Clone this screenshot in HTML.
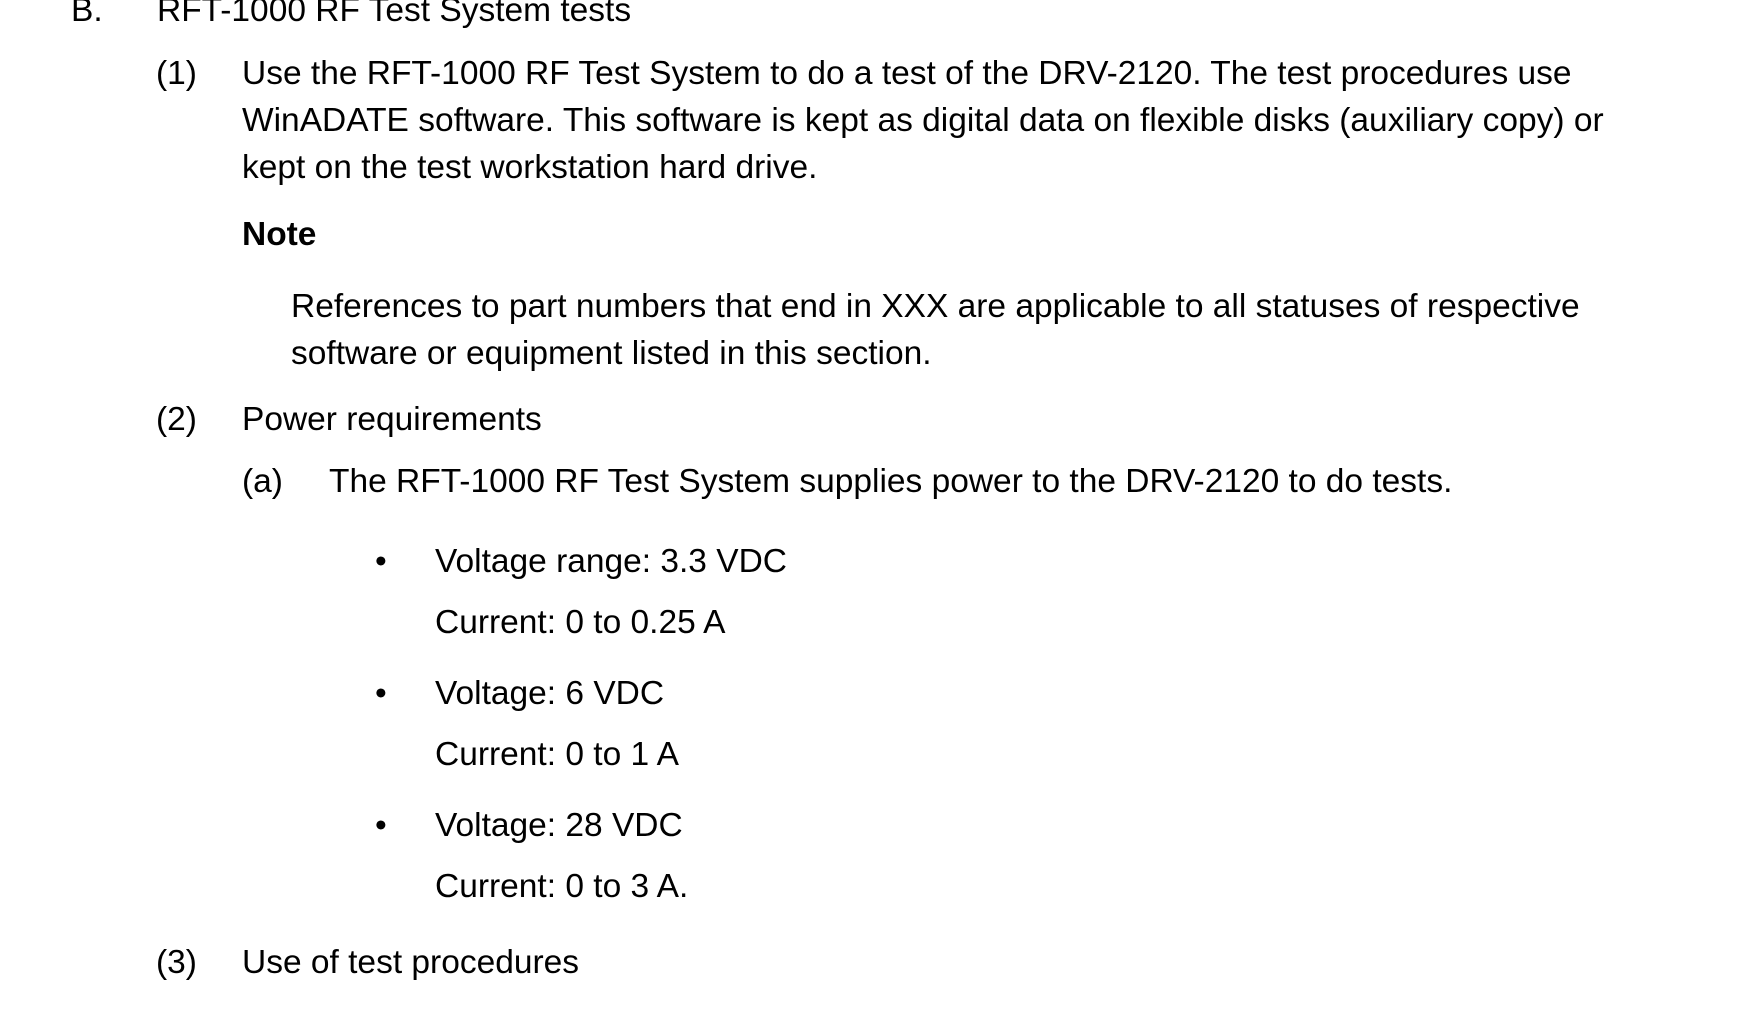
<!DOCTYPE html>
<html><head><meta charset="utf-8"><style>
html,body{margin:0;padding:0;background:#fff;}
body{width:1751px;height:1009px;position:relative;overflow:hidden;font-family:"Liberation Sans",Arial,sans-serif;font-size:33.5px;color:#000;}
div{position:absolute;white-space:nowrap;line-height:36px;}
b{font-weight:bold;}
</style></head><body>
<div style="left:71px;top:-7px">B.</div>
<div style="left:157px;top:-7px">RFT-1000 RF Test System tests</div>
<div style="left:156px;top:56px">(1)</div>
<div style="left:242px;top:56px">Use the RFT-1000 RF Test System to do a test of the DRV-2120. The test procedures use</div>
<div style="left:242px;top:103px">WinADATE software. This software is kept as digital data on flexible disks (auxiliary copy) or</div>
<div style="left:242px;top:150px">kept on the test workstation hard drive.</div>
<div style="left:242px;top:217px"><b>Note</b></div>
<div style="left:291px;top:289px">References to part numbers that end in XXX are applicable to all statuses of respective</div>
<div style="left:291px;top:336px">software or equipment listed in this section.</div>
<div style="left:156px;top:402px">(2)</div>
<div style="left:242px;top:402px">Power requirements</div>
<div style="left:242px;top:464px">(a)</div>
<div style="left:329px;top:464px">The RFT-1000 RF Test System supplies power to the DRV-2120 to do tests.</div>
<div style="left:375px;top:544px">•</div>
<div style="left:435px;top:544px">Voltage range: 3.3 VDC</div>
<div style="left:435px;top:605px">Current: 0 to 0.25 A</div>
<div style="left:375px;top:676px">•</div>
<div style="left:435px;top:676px">Voltage: 6 VDC</div>
<div style="left:435px;top:737px">Current: 0 to 1 A</div>
<div style="left:375px;top:808px">•</div>
<div style="left:435px;top:808px">Voltage: 28 VDC</div>
<div style="left:435px;top:869px">Current: 0 to 3 A.</div>
<div style="left:156px;top:945px">(3)</div>
<div style="left:242px;top:945px">Use of test procedures</div>
</body></html>
